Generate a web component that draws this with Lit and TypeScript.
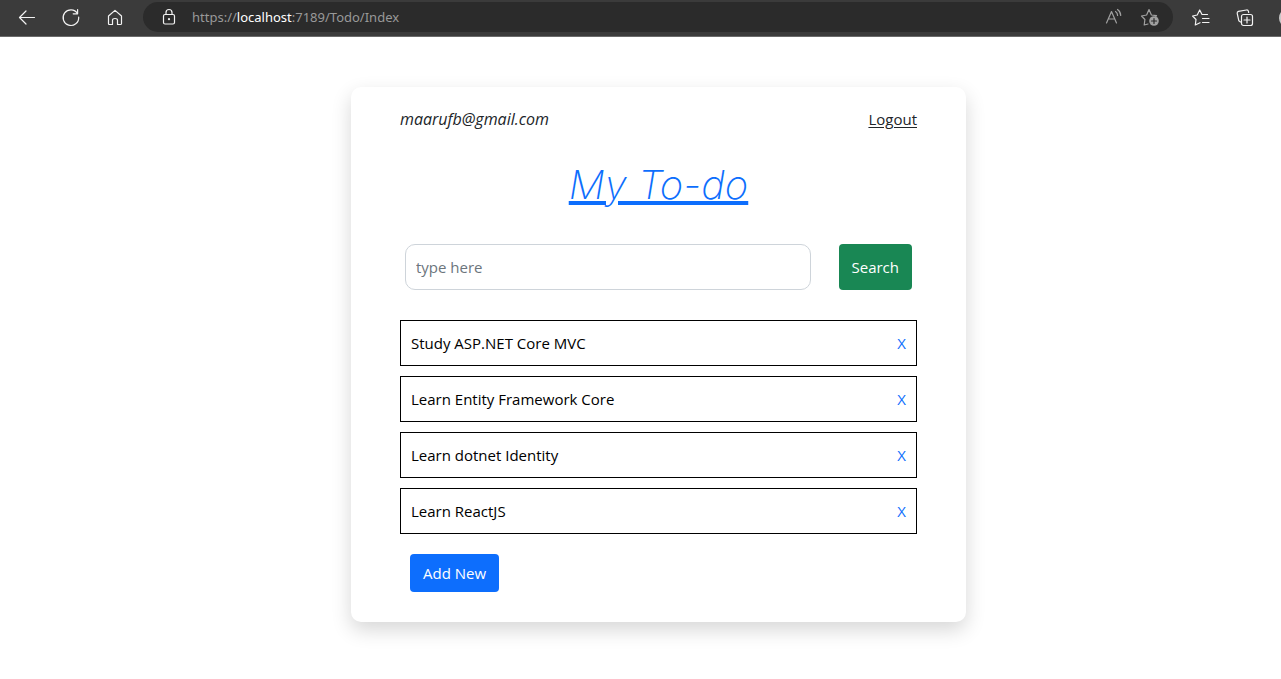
import { LitElement, html, css, svg } from "lit";
import { customElement, state } from "lit/decorators.js";

@customElement("browser-bar")
export class BrowserBar extends LitElement {
  static styles = css`
    :host {
      display: block;
      overflow: hidden;
      background: #3b3b3b;
      border-bottom: 1px solid #6a6a6a;
      font-family: "Noto Sans", "Open Sans", sans-serif;
      font-size: 13px;
    }
    .bar {
      display: flex;
      align-items: center;
      height: 36px;
      padding-left: 15px;
      box-sizing: border-box;
    }
    .nav {
      display: flex;
      gap: 20px;
      padding-right: 16px;
    }
    button {
      display: flex;
      flex: none;
      width: 24px;
      height: 24px;
      padding: 0;
      border: 0;
      background: none;
      color: #f2f2f2;
      font: inherit;
    }
    svg {
      width: 24px;
      height: 24px;
      fill: none;
      stroke: currentColor;
      stroke-width: 1.2;
      stroke-linecap: round;
      stroke-linejoin: round;
    }
    .solid {
      fill: currentColor;
      stroke: none;
    }
    .cut {
      stroke: #2b2b2b;
    }
    .address {
      display: flex;
      flex: 1;
      align-items: center;
      height: 30px;
      margin-top: -2px;
      padding: 0 11px 0 14px;
      border-radius: 15px;
      background: #2b2b2b;
      box-sizing: border-box;
    }
    .url {
      flex: 1;
      padding-left: 11px;
      color: #999;
      line-height: 20px;
      white-space: nowrap;
    }
    .host {
      color: #fff;
    }
    .address .tool {
      margin-left: 12px;
      color: #a0a0a0;
    }
    .tools {
      display: flex;
      gap: 20px;
      padding-left: 16px;
    }
    .profile {
      width: 2px;
      margin-left: 22px;
      overflow: hidden;
      flex: none;
    }
    .avatar {
      width: 20px;
      height: 20px;
      margin: 2px 0;
      border-radius: 50%;
      background: #c8c8c8;
      flex: none;
    }
  `;

  private icon(shape: unknown) {
    return html`<svg viewBox="0 0 24 24" aria-hidden="true">${shape}</svg>`;
  }

  render() {
    return html`
      <div class="bar">
        <div class="nav">
          <button aria-label="Back">
            ${this.icon(svg`<path d="M19.5 11.5H4.5M11 5L4.5 11.5L11 18" />`)}
          </button>
          <button aria-label="Refresh">
            ${this.icon(svg`<path d="M18.5 7.5A7.8 7.8 0 1 0 19.7 11.2M18.6 3.6V7.8H14.2" />`)}
          </button>
          <button aria-label="Home">
            ${this.icon(svg`<path d="M5.5 10L12 4.4L18.5 10V17.4Q18.5 18.5 17.4 18.5H14.5V14.3Q14.5 12.5 12 12.5T9.5 14.3V18.5H6.6Q5.5 18.5 5.5 17.4Z" />`)}
          </button>
        </div>
        <div class="address">
          <button aria-label="Site information">
            ${this.icon(svg`<rect x="6.5" y="9.5" width="11" height="9.5" rx="1.5" /><path d="M9 9.5V7.5A3 3 0 0 1 15 7.5V9.5" /><circle class="solid" cx="12" cy="14.2" r="1.1" />`)}
          </button>
          <div class="url">https://<span class="host">localhost</span>:7189/Todo/Index</div>
          <button class="tool" aria-label="Read aloud">
            ${this.icon(svg`<path d="M4.5 18L9.5 6.500L14.5 18M6.2 14H12.8M13.5 6.5Q15.6 8 15.6 10.5M15.5 4.5Q18.7 6.7 18.7 10.5" />`)}
          </button>
          <button class="tool" aria-label="Add to favorites">
            ${this.icon(svg`<path d="M10 19L6.2 20L6.9 14.5L3.5 11L8.6 10L11 4.5L13.4 10L18.5 10.7L17.5 12" /><circle class="solid" cx="16" cy="16" r="4.8" /><path class="cut" d="M16 13.5V18.5M13.5 16H18.5" />`)}
          </button>
        </div>
        <div class="tools">
          <button aria-label="Favorites">
            ${this.icon(svg`<path d="M18.5 8.5H13L10.7 4L8.2 9L3.6 10L7 13.5L6.3 19L11 16.7M13.5 12.5H20M13.5 16.5H20" />`)}
          </button>
          <button aria-label="Collections">
            ${this.icon(svg`<path d="M7.5 16L5.8 14.7L4.2 7.3Q4 5.8 5.4 5.4L13.5 4Q15 3.8 15.4 5.2L15.7 6.5" /><rect x="8.5" y="8.5" width="11" height="11" rx="2" /><path d="M14 11V17M11 14H17" />`)}
          </button>
        </div>
        <button class="profile" aria-label="Profile"><span class="avatar"></span></button>
      </div>
    `;
  }
}

@customElement("todo-card")
export class TodoCard extends LitElement {
  @state() private items = [
    "Study ASP.NET Core MVC",
    "Learn Entity Framework Core",
    "Learn dotnet Identity",
    "Learn ReactJS",
  ];

  static styles = css`
    :host {
      display: block;
      width: 100%;
      max-width: 615px;
      padding: 20px 49px 30px;
      border-radius: 10px;
      box-sizing: border-box;
      background: #fff;
      box-shadow: 0 8px 20px rgba(0, 0, 0, 0.16);
      color: #212529;
      font-family: "Open Sans", "Noto Sans", sans-serif;
      font-size: 15px;
      line-height: 24px;
    }
    .account {
      display: flex;
      justify-content: space-between;
    }
    .account em {
      font-size: 16px;
    }
    .logout {
      color: inherit;
      text-underline-offset: 2px;
    }
    h1 {
      margin: 30px 0 0;
      color: #0d6efd;
      font-family: Inter, sans-serif;
      font-size: 40px;
      font-style: italic;
      font-weight: 200;
      line-height: 48px;
      text-align: center;
      text-decoration: underline;
      text-decoration-thickness: 4px;
      text-underline-offset: 2px;
    }
    .search {
      display: flex;
      gap: 28px;
      margin: 35px 5px 30px;
    }
    input {
      flex: 1;
      min-width: 0;
      height: 46px;
      padding: 0 10px;
      border: 1px solid #ced4da;
      border-radius: 10px;
      box-sizing: border-box;
      background: #fff;
      color: inherit;
      font: inherit;
    }
    input::placeholder {
      color: #6c757d;
      opacity: 1;
    }
    .btn {
      padding: 7px 13px;
      border: 0;
      border-radius: 4px;
      color: #fff;
      font: inherit;
    }
    .green {
      background: #198754;
    }
    .blue {
      margin: 20px 10px 0;
      background: #0d6efd;
    }
    ul {
      display: grid;
      gap: 10px;
      margin: 0;
      padding: 0;
      list-style: none;
    }
    li {
      display: flex;
      justify-content: space-between;
      padding: 10px;
      border: 1px solid #000;
      color: #000;
    }
    .remove {
      padding: 0;
      border: 0;
      background: none;
      color: #0d6efd;
      font: inherit;
    }
  `;

  private remove(index: number) {
    this.items = this.items.filter((_, i) => i !== index);
  }

  render() {
    return html`
      <div class="account">
        <em>maarufb@gmail.com</em>
        <a class="logout" href="#">Logout</a>
      </div>
      <h1>My To-do</h1>
      <form class="search" @submit=${(e: Event) => e.preventDefault()}>
        <input type="text" placeholder="type here" aria-label="Search to-dos" />
        <button class="btn green">Search</button>
      </form>
      <ul>
        ${this.items.map(
          (item, i) => html`
            <li>
              <span>${item}</span>
              <button class="remove" aria-label="Remove ${item}" @click=${() => this.remove(i)}>X</button>
            </li>
          `
        )}
      </ul>
      <button class="btn blue">Add New</button>
    `;
  }
}

@customElement("app-root")
export class AppRoot extends LitElement {
  static styles = css`
    :host {
      display: block;
      min-height: 100vh;
      background: #fff;
    }
    main {
      display: flex;
      justify-content: center;
      padding: 50px 0 50px 36px;
    }
  `;

  render() {
    return html`
      <browser-bar></browser-bar>
      <main><todo-card></todo-card></main>
    `;
  }
}
